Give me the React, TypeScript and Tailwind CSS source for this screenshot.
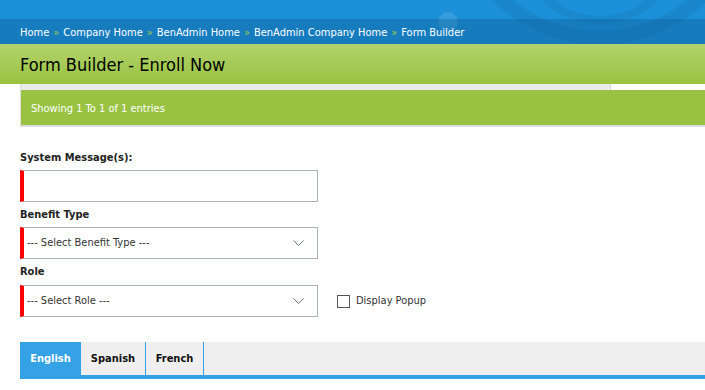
import * as React from 'react';

const crumbs = ['Home', 'Company Home', 'BenAdmin Home', 'BenAdmin Company Home', 'Form Builder'];

function Chevron() {
  return (
    <svg width="11" height="7" viewBox="0 0 11 7" className="text-gray-500">
      <path d="M0.5 0.5 L5.5 5.5 L10.5 0.5" fill="none" stroke="currentColor" strokeWidth="1" />
    </svg>
  );
}

function Select({ label }: { label: string }) {
  return (
    <div className="flex h-[32px] w-[298px] items-center justify-between border border-[#a9b3bb] border-l-4 border-l-[#f00] pl-[3px] pr-[13px] pt-[1px] text-[11px] text-[#333]">
      <span>{label}</span>
      <Chevron />
    </div>
  );
}

export default function App() {
  return (
    <div className="min-h-[390px] w-[705px] overflow-hidden bg-white font-['DejaVu_Sans_Condensed',sans-serif]">
      {/* header */}
      <div className="relative h-[44px] bg-[#1b90d8]">
        <svg className="absolute left-0 top-0" width="705" height="44">
          <circle cx="600" cy="-107" r="145" fill="none" stroke="#1670ad" strokeOpacity="0.3" strokeWidth="14" />
          <circle cx="600" cy="-58" r="78" fill="none" stroke="#1670ad" strokeOpacity="0.25" strokeWidth="8" />
          <circle cx="448" cy="22" r="10" fill="#ffffff" fillOpacity="0.12" />
        </svg>
        <div className="absolute bottom-0 left-0 right-0 flex h-[25px] items-center bg-[#0f5f99]/40 pl-[20px] pt-[3px] text-[11px] text-white">
          {crumbs.map((c, i) => (
            <React.Fragment key={c}>
              {i > 0 && <span className="mx-[4px] text-[11px] text-[#9ccb4a]">»</span>}
              <span>{c}</span>
            </React.Fragment>
          ))}
        </div>
      </div>

      {/* title */}
      <div className="flex h-[40px] items-center bg-gradient-to-b from-[#b2d36b] to-[#9ac240] pl-[20px] text-[18px] text-black">
        Form Builder - Enroll Now
      </div>

      <div className="ml-[20px] border-l border-b-2 border-[#dedede]">
        <div className="h-[6px] w-[590px] border-r border-[#d8d8d8] bg-[#ebebeb]" />
        <div className="flex h-[35px] items-center bg-[#99c242] pl-[10px] pt-[3px] text-[11px] text-white">
          Showing 1 To 1 of 1 entries
        </div>
      </div>

      {/* form */}
      <div className="px-[20px] pt-[23px] text-[#222]">
        <div className="text-[11px] font-bold leading-[16px]">System Message(s):</div>
        <div className="mt-[4px] h-[32px] w-[298px] border border-[#a9b3bb] border-l-4 border-l-[#f00]" />
        <div className="mt-[5px] text-[11px] font-bold leading-[16px]">Benefit Type</div>
        <div className="mt-[4px]">
          <Select label="--- Select Benefit Type ---" />
        </div>
        <div className="mt-[5px] text-[11px] font-bold leading-[16px]">Role</div>
        <div className="mt-[5px] flex items-center">
          <Select label="--- Select Role ---" />
          <div className="ml-[19px] h-[13px] w-[13px] border border-[#555]" />
          <span className="ml-[6px] text-[11px] text-[#333]">Display Popup</span>
        </div>
      </div>

      {/* tabs */}
      <div className="ml-[20px] mt-[25px] flex h-[37px] border-b-4 border-[#35a2e6] bg-[#efefef] text-[11px] font-bold">
        <div className="flex w-[61px] items-center justify-center bg-[#35a2e6] pt-[2px] text-white">English</div>
        <div className="flex w-[65px] items-center justify-center border-r border-[#35a2e6] pt-[2px] text-[#111]">Spanish</div>
        <div className="flex w-[58px] items-center justify-center border-r border-[#35a2e6] pt-[2px] text-[#111]">French</div>
      </div>
    </div>
  );
}
